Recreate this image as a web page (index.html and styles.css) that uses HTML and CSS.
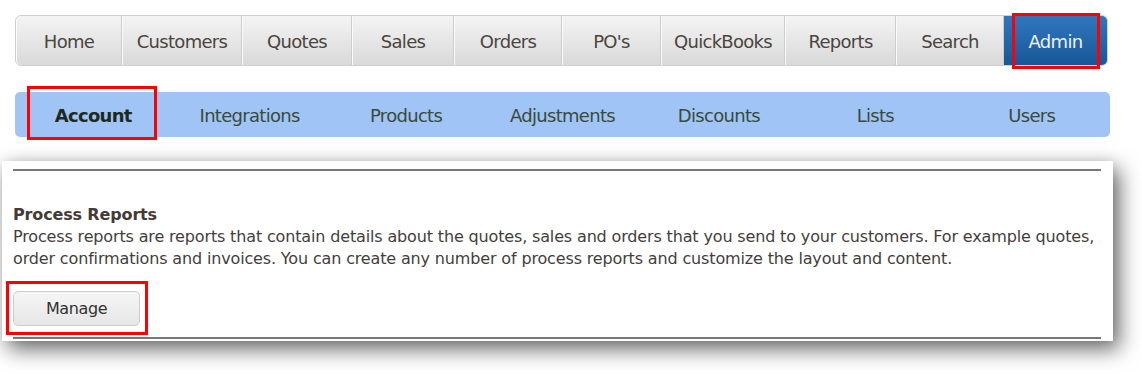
FILE: index.html
```html
<!DOCTYPE html>
<html lang="en">
<head>
  <meta charset="UTF-8" />
  <title>Admin - Account</title>
  <link rel="stylesheet" href="styles.css">
</head>
<body>
  <div class="top-nav">
    <a class="tab">Home</a>
    <a class="tab">Customers</a>
    <a class="tab">Quotes</a>
    <a class="tab">Sales</a>
    <a class="tab">Orders</a>
    <a class="tab">PO's</a>
    <a class="tab">QuickBooks</a>
    <a class="tab">Reports</a>
    <a class="tab">Search</a>
    <a class="tab active">Admin<span class="mark mark-admin"></span></a>
  </div>

  <div class="sub-nav">
    <a class="sub active">Account<span class="mark mark-account"></span></a>
    <a class="sub">Integrations</a>
    <a class="sub">Products</a>
    <a class="sub">Adjustments</a>
    <a class="sub">Discounts</a>
    <a class="sub">Lists</a>
    <a class="sub">Users</a>
  </div>

  <div class="card">
    <hr class="rule">
    <h3 class="section-title">Process Reports</h3>
    <p class="section-text">Process reports are reports that contain details about the quotes, sales and orders that you send to your customers. For example quotes, order confirmations and invoices. You can create any number of process reports and customize the layout and content.</p>
    <button class="btn">Manage<span class="mark mark-manage"></span></button>
    <hr class="rule rule-bottom">
  </div>
</body>
</html>
```

FILE: styles.css
```css
body {
  margin: 0;
  background: #ffffff;
  font-family: 'DejaVu Sans', Verdana, sans-serif;
  color: #443e3b;
  width: 1142px;
  height: 374px;
  overflow: hidden;
}

.top-nav {
  display: grid;
  grid-template-columns: 106px 120px 110px 102px 108px 99px 124px 111px 108px 103px;
  width: 1093px;
  height: 51px;
  box-sizing: border-box;
  margin: 15px 0 0 15px;
  border: 1px solid #cfcfcf;
  border-radius: 6px;
  background: #e2e2e2;
}

.tab {
  position: relative;
  display: flex;
  align-items: center;
  justify-content: center;
  padding-top: 2px;
  font-size: 18px;
  letter-spacing: -0.7px;
  color: #4b4440;
  background: linear-gradient(#f4f4f4, #d9d9d9);
  border-left: 1px solid #fbfbfb;
  border-right: 1px solid #cdcdcd;
}

.tab:first-child {
  border-radius: 5px 0 0 5px;
}

.tab.active {
  color: #eef3f9;
  background: linear-gradient(#3176bd, #175797);
  border: none;
  border-radius: 0 5px 5px 0;
}

.sub-nav {
  display: grid;
  grid-template-columns: repeat(7, 1fr);
  width: 1095px;
  height: 45px;
  margin: 26px 0 0 15px;
  background: #a0c4f6;
  border-radius: 5px;
}

.sub {
  position: relative;
  display: flex;
  align-items: center;
  justify-content: center;
  padding-top: 2px;
  font-size: 18px;
  letter-spacing: -0.7px;
  color: #384b3c;
}

.sub.active {
  font-weight: bold;
  color: #1d2a1f;
}

.card {
  width: 1111px;
  height: 180px;
  box-sizing: border-box;
  margin: 24px 0 0 2px;
  padding: 8px 12px 2px 11px;
  background: #ffffff;
  box-shadow: 6px 8px 20px rgba(0, 0, 0, 0.6), 0 -2px 10px rgba(0, 0, 0, 0.07);
  display: flex;
  flex-direction: column;
  align-items: flex-start;
}

.rule {
  align-self: stretch;
  margin: 0;
  height: 2px;
  border: none;
  background: #777777;
}

.section-title {
  margin: 33px 0 0;
  font-size: 16px;
  line-height: 22px;
  letter-spacing: -0.15px;
  color: #433b38;
}

.section-text {
  margin: 0;
  font-size: 16px;
  line-height: 22px;
  letter-spacing: -0.15px;
}

.btn {
  position: relative;
  margin-top: 21px;
  width: 127px;
  height: 35px;
  border: 1px solid #cccccc;
  border-radius: 5px;
  background: linear-gradient(#f6f6f6, #e6e6e6);
  font-family: 'DejaVu Sans', Verdana, sans-serif;
  font-size: 16px;
  letter-spacing: -0.4px;
  color: #333333;
}

.rule-bottom {
  margin-top: auto;
}

/* red annotation boxes */
.mark {
  position: absolute;
  border: 3px solid #ff0000;
  pointer-events: none;
}

.mark-admin {
  left: 8px;
  right: 7px;
  top: -3px;
  bottom: -4px;
}

.mark-account {
  left: 12px;
  right: 14px;
  top: -6px;
  bottom: -3px;
}

.mark-manage {
  left: -8px;
  right: -9px;
  top: -11px;
  bottom: -10px;
}
```
